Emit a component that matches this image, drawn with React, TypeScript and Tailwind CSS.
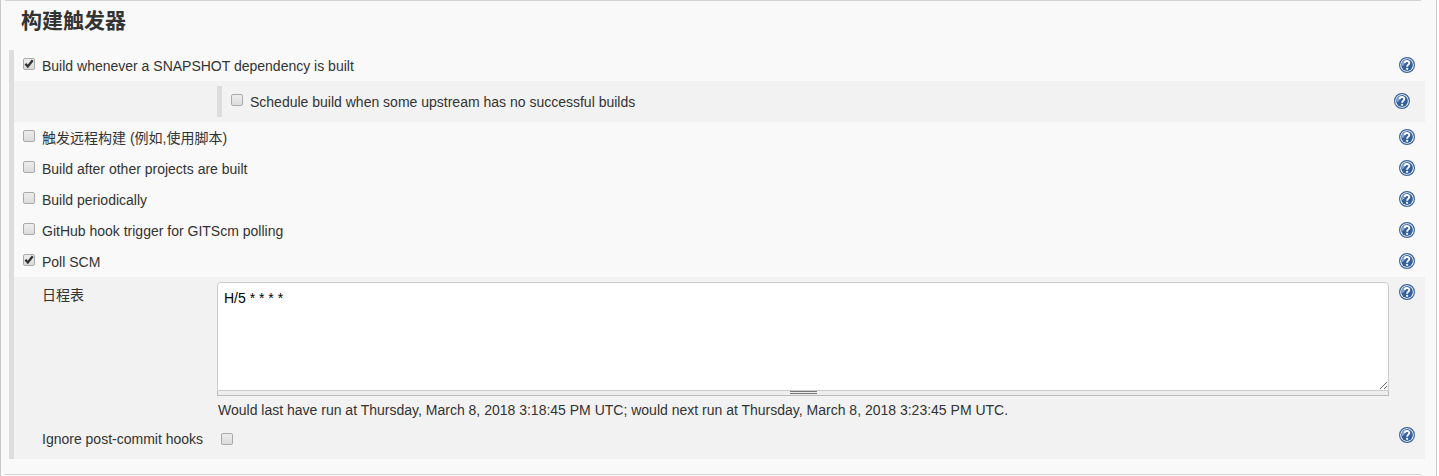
import { useId, useState } from "react";

function Check({ id, initial = false }: { id: string; initial?: boolean }) {
  const [checked, setChecked] = useState(initial);
  return (
    <span className="grid size-3 shrink-0">
      <input
        id={id}
        type="checkbox"
        checked={checked}
        onChange={(e) => setChecked(e.target.checked)}
        className="col-start-1 row-start-1 size-3 appearance-none rounded-xs border border-[#aaaaaa] bg-linear-to-b from-[#ededed] to-[#dcdcdc]"
      />
      {checked && (
        <svg viewBox="0 0 12 12" className="pointer-events-none z-10 col-start-1 row-start-1 size-3" aria-hidden="true">
          <path d="M2.4 5.8 4.800 8.500 9.700 2.200" fill="none" stroke="#333" strokeWidth="2.3" />
        </svg>
      )}
    </span>
  );
}

function Help({ topic }: { topic: string }) {
  return (
    <button type="button" aria-label={`Help for feature: ${topic}`} className="size-4 shrink-0">
      <svg viewBox="0 0 16 16" className="size-4" aria-hidden="true">
        <circle cx="8" cy="8" r="7.400" fill="#fff" stroke="#3a639c" strokeWidth="1.200" />
        <circle cx="8" cy="8" r="5.900" fill="#34609c" />
        <path d="M2.600 9.500A5.500 5.500 0 0 1 8 2.600C7.500 5 6 8 2.600 9.500Z" fill="#8aa8cf" />
        <path d="M5.700 6.100C5.700 3.300 10.400 3.400 10.300 6.100 10.300 7.700 8.100 7.600 8.100 9.700" fill="none" stroke="#fff" strokeWidth="1.900" />
        <circle cx="8.100" cy="11.800" r="1.150" fill="#fff" />
      </svg>
    </button>
  );
}

function TriggerRow({ label, checked }: { label: string; checked?: boolean }) {
  const id = useId();
  return (
    <div className="flex h-[31px] items-start pr-[10px] pl-[9px]">
      <div className="flex flex-1 items-start gap-[7px] pt-2">
        <Check id={id} initial={checked} />
        <label htmlFor={id} className="leading-4">
          {label}
        </label>
      </div>
      <div className="flex pt-[7px]">
        <Help topic={label} />
      </div>
    </div>
  );
}

export default function App() {
  const [schedule, setSchedule] = useState("H/5 * * * *");
  return (
    <main className="mr-0.5 border-x border-[#c8c8c8] bg-[#f9f9f9] pr-[11px] pl-2 font-['Liberation_Sans','Noto_Sans_CJK_SC',sans-serif] text-[14px] text-[#333333]">
      <hr className="mr-1 -ml-1 border-[#d3d3d3]" />
      <h2 className="pt-1 pl-3 text-[21px] leading-8 font-bold">构建触发器</h2>
      <section className="mt-[13px] border-l-[5px] border-[#dddddd]">
        <TriggerRow label="Build whenever a SNAPSHOT dependency is built" checked />
        <div className="flex h-[41px] items-start bg-[#f2f2f2] pt-[5px] pr-[15px] pl-[203px]">
          <div className="flex h-[31px] flex-1 items-start gap-[7px] border-l-[5px] border-[#dddddd] pt-2 pl-[9px]">
            <Check id="upstream" />
            <label htmlFor="upstream" className="leading-4">
              Schedule build when some upstream has no successful builds
            </label>
          </div>
          <div className="flex pt-[7px]">
            <Help topic="Schedule build when some upstream has no successful builds" />
          </div>
        </div>
        <TriggerRow label="触发远程构建 (例如,使用脚本)" />
        <TriggerRow label="Build after other projects are built" />
        <TriggerRow label="Build periodically" />
        <TriggerRow label="GitHub hook trigger for GITScm polling" />
        <TriggerRow label="Poll SCM" checked />
        <div className="bg-[#f2f2f2] pt-[5px] pr-[10px] pb-3">
          <div className="flex items-start">
            <label htmlFor="schedule" className="w-[203px] shrink-0 pt-[5px] pl-7 leading-4">
              日程表
            </label>
            <div className="min-w-0 flex-1">
              <textarea
                id="schedule"
                value={schedule}
                onChange={(e) => setSchedule(e.target.value)}
                className="block h-[109px] w-full resize-y rounded-t-sm border border-[#cccccc] bg-white px-1.5 py-[7px] leading-4 text-black"
              />
              <div className="flex h-[5px] items-start justify-center border border-t-0 border-[#bbbbbb] bg-[#eeeeee]">
                <div className="h-[3px] w-[27px] border-y border-[#777777]" />
              </div>
              <p className="pt-1.5 pl-px leading-4">
                Would last have run at Thursday, March 8, 2018 3:18:45 PM UTC; would next run at Thursday, March 8, 2018 3:23:45 PM UTC.
              </p>
            </div>
            <div className="flex pt-0.5 pl-[10px]">
              <Help topic="Schedule" />
            </div>
          </div>
          <div className="flex items-start pt-[9px]">
            <label htmlFor="hooks" className="w-[207px] shrink-0 pt-1 pl-7 leading-4">
              Ignore post-commit hooks
            </label>
            <div className="flex flex-1 pt-1.5">
              <Check id="hooks" />
            </div>
            <Help topic="Ignore post-commit hooks" />
          </div>
        </div>
      </section>
      <hr className="mt-[15px] mr-1 -ml-1 border-[#d3d3d3]" />
      <div className="h-px" />
    </main>
  );
}
